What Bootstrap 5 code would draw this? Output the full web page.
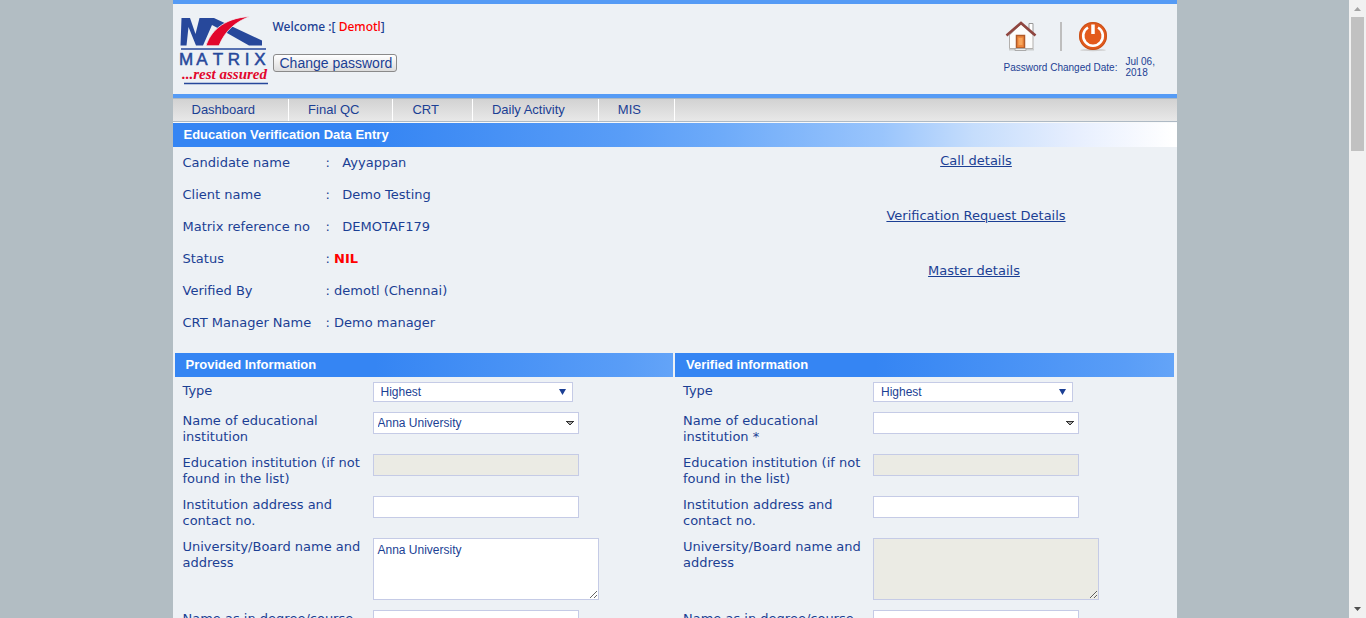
<!DOCTYPE html>
<html lang="en">
<head>
<meta charset="utf-8">
<meta name="viewport" content="width=device-width, initial-scale=1">
<title>Education Verification Data Entry</title>
<link href="https://cdn.jsdelivr.net/npm/bootstrap@5.3.0/dist/css/bootstrap.min.css" rel="stylesheet">
<style>
  :root { --ink: #1b3f94; --bar: #559bf5; --line: #c5cbe6; }
  body { background: #b2bdc3; color: var(--ink); font: 13px/16px "DejaVu Sans", Verdana, sans-serif; }
  a { color: var(--ink); }
  .view { overflow-y: auto; scrollbar-width: none; }
  .view::-webkit-scrollbar { display: none; }
  .sheet { max-width: 1004px; background: #edf1f5; }
  .masthead { border-top: 4px solid var(--bar); border-bottom: 4px solid var(--bar); height: 98px; }
  .welcome { font: 500 12px/16px "Noto Sans", sans-serif; padding-top: 15px; }
  .red { color: #f00; }
  .btn-pass { font: 14px/16px "Liberation Sans", Arial, sans-serif; color: var(--ink); background: linear-gradient(#fff, #dcdcdc); border: 1px solid #8a8a8a; border-radius: 3px; padding: 0 4px 0 6px; margin-top: 19px; }
  .tools { width: 173px; padding-top: 16px; font: 10px/11px "Liberation Sans", Arial, sans-serif; }
  .tools .sep { width: 2px; height: 29px; background: #bebebe; margin: 0 16px 0 22px; }
  .menu { height: 24px; border-top: 1px solid #adb9c4; border-bottom: 1px solid #adb9c4; background: linear-gradient(#d2d2d2, #e8e8e8); font: 13px/22px "Liberation Sans", Arial, sans-serif; }
  .menu a { padding: 0 33px 0 19px; border-right: 1px solid #fff; text-decoration: none; }
  .title { font: bold 13px/24px "Liberation Sans", Arial, sans-serif; color: #fff; padding-left: 11px; background: linear-gradient(90deg, #3585f3 0, #3585f3 200px, #599df7 450px, #6eabf9 550px, #9ac5fc 710px, #c5ddfc 800px, #e6eefe 900px, #fff 1000px); }
  .facts { margin-left: 10px; }
  .facts td, .facts th { padding: 8px 0; font-weight: normal; }
  .facts th { width: 143px; }
  .fact-links { width: 401px; padding-top: 6px; }
  .fact-links a { margin-bottom: 39px; }
  .entries { padding: 14px 3px 0 2px; gap: 2px; }
  .entries > section { flex: 1 1 0; min-width: 0; }
  .pane { padding: 5px 0 0 8px; }
  .entry { min-height: 42px; }
  .entry-first { min-height: 30px; }
  .entry-tall { min-height: 72px; }
  .pane label { width: 190px; padding-top: 1px; flex-shrink: 0; }
  .field { font: 12px/14px "Liberation Sans", Arial, sans-serif; color: var(--ink); border: 1px solid var(--line); background-color: #fff; width: 206px; height: 22px; padding: 3px 4px; border-radius: 0; }
  .field:disabled { background-color: #ebebe4; opacity: 1; }
  textarea.field { width: 226px; height: 62px; padding: 4px; }
  select.field { appearance: none; background-repeat: no-repeat; background-position: right 4px center; background-image: url("data:image/svg+xml,%3Csvg xmlns='http://www.w3.org/2000/svg' width='8' height='5'%3E%3Cpath d='M0 .5h8M1 1l3 3 3-3' fill='%23aaa' stroke='%23333'/%3E%3C/svg%3E"); }
  select.short { width: 200px; height: 20px; padding: 2px 7px; background-position: right 6px center; background-image: url("data:image/svg+xml,%3Csvg xmlns='http://www.w3.org/2000/svg' width='7' height='6'%3E%3Cpath d='M0 0h7L3.500 6z' fill='%231b3f94'/%3E%3C/svg%3E"); }
  .rail { width: 17px; background: #f1f1f1; }
  .rail .thumb { width: 13px; height: 134px; background: #c1c1c1; }
</style>
<script src="https://cdn.jsdelivr.net/npm/bootstrap@5.3.0/dist/js/bootstrap.bundle.min.js"></script>
</head>
<body class="d-flex vh-100 overflow-hidden">
<div class="view flex-grow-1 h-100">
  <div class="sheet mx-auto">
    <header class="masthead d-flex">
      <svg class="flex-shrink-0 ms-1" width="96" height="88" viewBox="177 4 96 88" role="img" aria-label="Matrix, rest assured">
        <path d="M180.500 45.500L181.500 18h8.500l5.500 16 4-16H214l48 22.500v5H249L227 33l-15-8-9 20.500h-7L188.500 27l-2 18.500z" fill="#27489b"/>
        <path d="M206 45.800C210 33 222 18 250 16.500c-14 5-25 14-31 29.300z" fill="#e2062c" stroke="#edf1f5" stroke-width=".8"/>
        <path d="M181 49h85M184 83.500h84" stroke="#27489b" stroke-width="1.300"/>
        <text x="186 202 218 234 247 260" y="65" text-anchor="middle" font-family="Liberation Sans, Arial, sans-serif" font-size="17" fill="#27489b" stroke="#27489b" stroke-width=".5">MATRIX</text>
        <text x="182" y="79" font-family="Liberation Serif, serif" font-size="15" font-style="italic" font-weight="bold" fill="#e2062c">...rest assured</text>
      </svg>
      <div>
        <div class="welcome">Welcome :[ <span class="red">Demotl</span>]</div>
        <button type="button" class="btn-pass">Change password</button>
      </div>
      <div class="tools ms-auto">
        <div class="d-flex align-items-center mb-1">
          <a href="#" aria-label="Home" class="d-block lh-1"><svg class="d-block" width="34" height="32" viewBox="0 0 34 32">
            <path d="M5 29.500h25" stroke="#c9cccd" stroke-width="2"/>
            <path d="M25 3.500h4v12h-4z" fill="#fff" stroke="#999"/>
            <path d="M5.500 15L17 4l12 11v13.500h-23.500z" fill="#fcfcfb" stroke="#b3b0ad"/>
            <path d="M2.500 15.500L17 3l14.500 12.500" fill="none" stroke="#8f4640" stroke-width="2.600"/>
            <path d="M12.500 15.500h8V28h-8z" fill="#ee873b" stroke="#b05a28" stroke-width="1.500"/>
            <path d="M14.500 18h4v7h-4z" fill="#f7a55c"/><path d="M11 28.500h11v2H11z" fill="#eee" stroke="#aaa"/>
          </svg></a>
          <span class="sep"></span>
          <a href="#" aria-label="Log out" class="d-block lh-1"><svg class="d-block" width="30" height="32" viewBox="0 0 30 32">
            <ellipse cx="15" cy="30" rx="13" ry="1.200" fill="#cfcfcf"/>
            <circle cx="15" cy="16" r="14" fill="#e35a1c"/><circle cx="15" cy="16" r="13.500" fill="none" stroke="#c5521d"/>
            <path d="M10 7.500A9.800 9.800 0 1 0 20 7.500" fill="none" stroke="#fff" stroke-width="2.600"/>
            <path d="M15 4.500v9.500" stroke="#fff" stroke-width="3.500"/>
          </svg></a>
        </div>
        <div class="d-flex align-items-center">
          <span class="text-nowrap me-2">Password Changed Date:</span>
          <span>Jul 06,<br>2018</span>
        </div>
      </div>
    </header>
    <nav class="menu d-flex">
      <a href="#">Dashboard</a><a href="#">Final QC</a><a href="#">CRT</a><a href="#">Daily Activity</a><a href="#">MIS</a>
    </nav>
    <h1 class="title mb-0 mt-0 border-top border-light">Education Verification Data Entry</h1>
    <section class="d-flex justify-content-between">
      <table class="facts">
        <tr><th scope="row">Candidate name</th><td>:&nbsp;&nbsp; Ayyappan</td></tr>
        <tr><th scope="row">Client name</th><td>:&nbsp;&nbsp; Demo Testing</td></tr>
        <tr><th scope="row">Matrix reference no</th><td>:&nbsp;&nbsp; DEMOTAF179</td></tr>
        <tr><th scope="row">Status</th><td>: <b class="red">NIL</b></td></tr>
        <tr><th scope="row">Verified By</th><td>: demotl (Chennai)</td></tr>
        <tr><th scope="row">CRT Manager Name</th><td>: Demo manager</td></tr>
      </table>
      <div class="fact-links d-flex flex-column align-items-center">
        <a href="#">Call details</a>
        <a href="#">Verification Request Details</a>
        <a href="#" class="me-1">Master details</a>
      </div>
    </section>
    <form class="entries d-flex">
      <section>
        <h2 class="title mb-0">Provided Information</h2>
        <div class="pane">
          <div class="entry-first d-flex align-items-start"><label for="p1">Type</label><select id="p1" class="field short"><option>Highest</option></select></div>
          <div class="entry d-flex align-items-start"><label for="p2">Name of educational institution</label><select id="p2" class="field"><option>Anna University</option></select></div>
          <div class="entry d-flex align-items-start"><label for="p3">Education institution (if not found in the list)</label><input id="p3" class="field" disabled></div>
          <div class="entry d-flex align-items-start"><label for="p4">Institution address and contact no.</label><input id="p4" class="field"></div>
          <div class="entry-tall d-flex align-items-start"><label for="p5">University/Board name and address</label><textarea id="p5" class="field">Anna University</textarea></div>
          <div class="entry d-flex align-items-start"><label for="p6">Name as in degree/course</label><input id="p6" class="field"></div>
        </div>
      </section>
      <section>
        <h2 class="title mb-0">Verified information</h2>
        <div class="pane">
          <div class="entry-first d-flex align-items-start"><label for="v1">Type</label><select id="v1" class="field short"><option>Highest</option></select></div>
          <div class="entry d-flex align-items-start"><label for="v2">Name of educational institution *</label><select id="v2" class="field"><option></option></select></div>
          <div class="entry d-flex align-items-start"><label for="v3">Education institution (if not found in the list)</label><input id="v3" class="field" disabled></div>
          <div class="entry d-flex align-items-start"><label for="v4">Institution address and contact no.</label><input id="v4" class="field"></div>
          <div class="entry-tall d-flex align-items-start"><label for="v5">University/Board name and address</label><textarea id="v5" class="field" disabled></textarea></div>
          <div class="entry d-flex align-items-start"><label for="v6">Name as in degree/course</label><input id="v6" class="field"></div>
        </div>
      </section>
    </form>
  </div>
</div>
<div class="rail flex-shrink-0 d-flex flex-column align-items-center" aria-hidden="true">
  <svg width="17" height="17"><path d="M5 11h7L8.500 7z" fill="#a3a3a3"/></svg>
  <div class="thumb"></div>
  <svg class="mt-auto" width="17" height="17"><path d="M5 6h7L8.500 10z" fill="#505050"/></svg>
</div>
</body>
</html>
